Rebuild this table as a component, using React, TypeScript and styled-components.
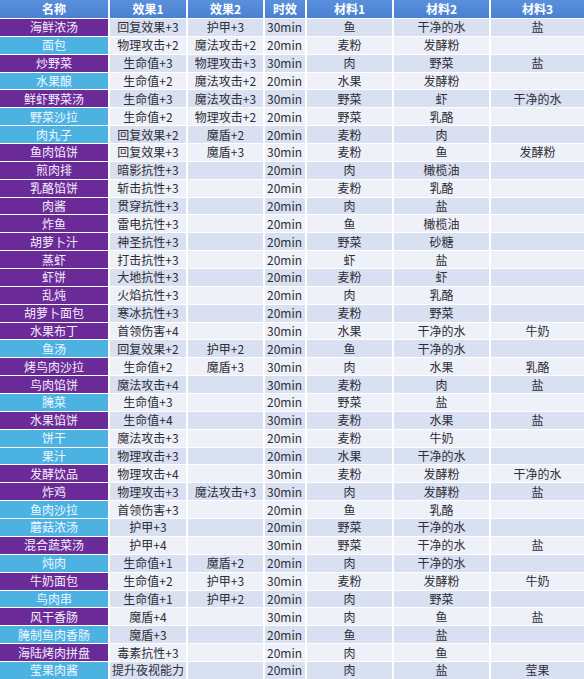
import React from 'react';
import styled, { createGlobalStyle } from 'styled-components';

type Kind = 'p' | 'b';
type Row = [string, Kind, string, string, string, string, string, string];

const rows: Row[] = [
  ['海鲜浓汤', 'p', '回复效果+3', '护甲+3', '30min', '鱼', '干净的水', '盐'],
  ['面包', 'b', '物理攻击+2', '魔法攻击+2', '20min', '麦粉', '发酵粉', ''],
  ['炒野菜', 'p', '生命值+3', '物理攻击+3', '30min', '肉', '野菜', '盐'],
  ['水果酿', 'b', '生命值+2', '魔法攻击+2', '20min', '水果', '发酵粉', ''],
  ['鲜虾野菜汤', 'p', '生命值+3', '魔法攻击+3', '30min', '野菜', '虾', '干净的水'],
  ['野菜沙拉', 'b', '生命值+2', '物理攻击+2', '20min', '野菜', '乳酪', ''],
  ['肉丸子', 'b', '回复效果+2', '魔盾+2', '20min', '麦粉', '肉', ''],
  ['鱼肉馅饼', 'p', '回复效果+3', '魔盾+3', '30min', '麦粉', '鱼', '发酵粉'],
  ['煎肉排', 'p', '暗影抗性+3', '', '20min', '肉', '橄榄油', ''],
  ['乳酪馅饼', 'p', '斩击抗性+3', '', '20min', '麦粉', '乳酪', ''],
  ['肉酱', 'p', '贯穿抗性+3', '', '20min', '肉', '盐', ''],
  ['炸鱼', 'p', '雷电抗性+3', '', '20min', '鱼', '橄榄油', ''],
  ['胡萝卜汁', 'p', '神圣抗性+3', '', '20min', '野菜', '砂糖', ''],
  ['蒸虾', 'p', '打击抗性+3', '', '20min', '虾', '盐', ''],
  ['虾饼', 'p', '大地抗性+3', '', '20min', '麦粉', '虾', ''],
  ['乱炖', 'p', '火焰抗性+3', '', '20min', '肉', '乳酪', ''],
  ['胡萝卜面包', 'p', '寒冰抗性+3', '', '20min', '麦粉', '野菜', ''],
  ['水果布丁', 'p', '首领伤害+4', '', '30min', '水果', '干净的水', '牛奶'],
  ['鱼汤', 'b', '回复效果+2', '护甲+2', '20min', '鱼', '干净的水', ''],
  ['烤鸟肉沙拉', 'p', '生命值+2', '魔盾+3', '30min', '肉', '水果', '乳酪'],
  ['鸟肉馅饼', 'p', '魔法攻击+4', '', '30min', '麦粉', '肉', '盐'],
  ['腌菜', 'b', '生命值+3', '', '20min', '野菜', '盐', ''],
  ['水果馅饼', 'p', '生命值+4', '', '30min', '麦粉', '水果', '盐'],
  ['饼干', 'b', '魔法攻击+3', '', '20min', '麦粉', '牛奶', ''],
  ['果汁', 'b', '物理攻击+3', '', '20min', '水果', '干净的水', ''],
  ['发酵饮品', 'p', '物理攻击+4', '', '30min', '麦粉', '发酵粉', '干净的水'],
  ['炸鸡', 'p', '物理攻击+3', '魔法攻击+3', '30min', '肉', '发酵粉', '盐'],
  ['鱼肉沙拉', 'b', '首领伤害+3', '', '20min', '鱼', '乳酪', ''],
  ['蘑菇浓汤', 'b', '护甲+3', '', '20min', '野菜', '干净的水', ''],
  ['混合蔬菜汤', 'p', '护甲+4', '', '30min', '野菜', '干净的水', '盐'],
  ['炖肉', 'b', '生命值+1', '魔盾+2', '20min', '肉', '干净的水', ''],
  ['牛奶面包', 'p', '生命值+2', '护甲+3', '30min', '麦粉', '发酵粉', '牛奶'],
  ['鸟肉串', 'b', '生命值+1', '护甲+2', '20min', '肉', '野菜', ''],
  ['风干香肠', 'p', '魔盾+4', '', '30min', '肉', '鱼', '盐'],
  ['腌制鱼肉香肠', 'b', '魔盾+3', '', '20min', '鱼', '盐', ''],
  ['海陆烤肉拼盘', 'p', '毒素抗性+3', '', '20min', '肉', '鱼', ''],
  ['莹果肉酱', 'b', '提升夜视能力', '', '20min', '肉', '盐', '莹果'],
];

const headers = ['名称', '效果1', '效果2', '时效', '材料1', '材料2', '材料3'];

const GlobalStyle = createGlobalStyle`
  html, body {
    margin: 0;
    padding: 0;
    background: #ffffff;
  }
  body {
    font-family: "Noto Sans CJK SC", "Noto Sans", sans-serif;
  }
`;

const Table = styled.div`
  display: grid;
  grid-template-columns: 108px 76px 75px 40px 85px 95px 93px;
  grid-template-rows: 18px;
  grid-auto-rows: 16.86px;
  column-gap: 2px;
  row-gap: 1px;
  width: 584px;
  background: #ffffff;
`;

const HeadCell = styled.div`
  display: flex;
  align-items: center;
  justify-content: center;
  background: linear-gradient(#5a90db, #4a80d2);
  color: #ffffff;
  font-size: 12px;
  font-weight: 700;
  line-height: 1;
`;

const NameCell = styled.div<{ $kind: Kind }>`
  display: flex;
  align-items: center;
  justify-content: center;
  background: ${(p) => (p.$kind === 'p' ? '#6a2a98' : '#4cb2e2')};
  color: ${(p) => (p.$kind === 'p' ? '#f4eefa' : '#eef8ff')};
  font-size: 12px;
  line-height: 1;
  white-space: nowrap;
`;

const Cell = styled.div<{ $odd: boolean; $left?: boolean }>`
  display: flex;
  align-items: center;
  justify-content: ${(p) => (p.$left ? 'flex-start' : 'center')};
  padding-left: ${(p) => (p.$left ? '2px' : '0')};
  background: ${(p) => (p.$odd ? '#d8e0f1' : '#eef1f8')};
  color: #2e2e36;
  font-size: 12px;
  line-height: 1;
  white-space: nowrap;
  overflow: hidden;
`;

export default function App() {
  return (
    <>
      <GlobalStyle />
      <Table>
        {headers.map((h) => (
          <HeadCell key={h}>{h}</HeadCell>
        ))}
        {rows.map((r, i) => {
          const odd = i % 2 === 0;
          return (
            <React.Fragment key={r[0]}>
              <NameCell $kind={r[1]}>{r[0]}</NameCell>
              <Cell $odd={odd}>{r[2]}</Cell>
              <Cell $odd={odd}>{r[3]}</Cell>
              <Cell $odd={odd} $left>{r[4]}</Cell>
              <Cell $odd={odd}>{r[5]}</Cell>
              <Cell $odd={odd}>{r[6]}</Cell>
              <Cell $odd={odd}>{r[7]}</Cell>
            </React.Fragment>
          );
        })}
      </Table>
    </>
  );
}
